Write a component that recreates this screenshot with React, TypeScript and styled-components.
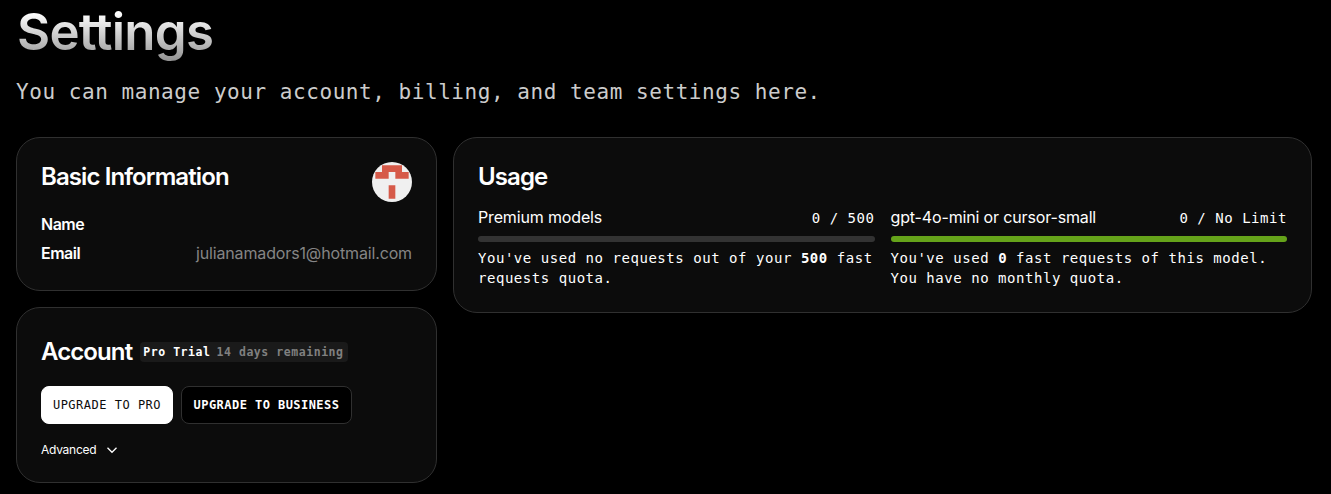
import React from "react";
import styled, { createGlobalStyle } from "styled-components";

const SANS = `Inter, "Liberation Sans", sans-serif`;
const MONO = `"DejaVu Sans Mono", "Liberation Mono", monospace`;

const GlobalStyle = createGlobalStyle`
  *, *::before, *::after { box-sizing: border-box; }
  html { background: #000; }
  body { margin: 0; background: #000; color: #fff; font-family: ${SANS}; overflow: hidden; }
`;

const Page = styled.main`
  height: 494px;
  padding: 0 19px 0 16px;
`;

const PageTitle = styled.h1`
  margin: 0;
  width: max-content;
  padding: 0 3px 0 1px;
  font-size: 51px;
  line-height: 64px;
  font-weight: 600;
  letter-spacing: -0.75px;
  color: transparent;
  background: linear-gradient(to bottom, #fff 20%, #8c8c8c 100%);
  background-clip: text;
  -webkit-background-clip: text;
`;

const Subtitle = styled.p`
  margin: 12px 0 0;
  font-family: ${MONO};
  font-size: 21px;
  line-height: 32px;
  letter-spacing: 0.55px;
  color: #ccc;
  white-space: nowrap;
`;

const Columns = styled.div`
  display: grid;
  grid-template-columns: 421px 859px;
  gap: 16px;
  align-items: start;
  margin-top: 29px;
`;

const Stack = styled.div`
  display: flex;
  flex-direction: column;
  gap: 16px;
`;

const Card = styled.section<{ $height: number }>`
  height: ${(p) => p.$height}px;
  padding: 24px;
  border: 1px solid #303030;
  border-radius: 24px;
  background: #0c0c0c;
`;

const AccountCard = styled(Card)`
  padding-top: 29px;
`;

const CardHeader = styled.header<{ $center?: boolean }>`
  display: flex;
  justify-content: ${(p) => (p.$center ? "flex-start" : "space-between")};
  align-items: ${(p) => (p.$center ? "center" : "flex-start")};
  gap: 8px;
`;

const CardTitle = styled.h2`
  margin: 0;
  font-size: 24px;
  line-height: 30px;
  font-weight: 600;
  letter-spacing: -0.9px;
  white-space: nowrap;
`;

const Avatar = styled.svg`
  width: 40px;
  height: 40px;
  border-radius: 50%;
  flex: none;
`;

const Details = styled.dl`
  margin: 10px 0 0;
  display: grid;
  row-gap: 5px;
`;

const DetailRow = styled.div`
  display: flex;
  justify-content: space-between;
  font-size: 16px;
  line-height: 24px;
`;

const Term = styled.dt`
  font-weight: 600;
  letter-spacing: -0.5px;
`;

const Value = styled.dd`
  margin: 0;
  color: #858585;
  letter-spacing: -0.14px;
`;

const Badge = styled.span`
  display: inline-flex;
  align-items: center;
  gap: 6px;
  height: 20px;
  padding: 0 4px 0 3px;
  border-radius: 4px;
  background: #1a1a1a;
  font-family: ${MONO};
  font-size: 11.5px;
  font-weight: 700;
  letter-spacing: 0.55px;
  color: #808080;
  white-space: nowrap;
`;

const BadgePlan = styled.span`
  color: #fff;
`;

const Actions = styled.div`
  display: flex;
  gap: 8px;
  margin-top: 19px;
`;

const Button = styled.button<{ $primary?: boolean }>`
  width: ${(p) => (p.$primary ? 132 : 171)}px;
  height: 38px;
  padding: 0;
  border: 1px solid ${(p) => (p.$primary ? "#fff" : "#303030")};
  border-radius: 8px;
  background: ${(p) => (p.$primary ? "#fff" : "#000")};
  color: ${(p) => (p.$primary ? "#0c0c0c" : "#fff")};
  font-family: ${MONO};
  font-size: 12px;
  font-weight: ${(p) => (p.$primary ? 400 : 700)};
  letter-spacing: ${(p) => (p.$primary ? 0.5 : 0.45)}px;
  white-space: nowrap;
`;

const Advanced = styled.button`
  display: flex;
  align-items: center;
  gap: 10px;
  margin-top: 18px;
  padding: 0;
  border: 0;
  background: none;
  color: #fff;
  font-family: ${SANS};
  font-size: 12px;
  line-height: 16px;
  letter-spacing: -0.25px;
`;

const Chevron = styled.svg`
  width: 12px;
  height: 12px;
`;

const UsageGrid = styled.div`
  display: grid;
  grid-template-columns: 1fr 1fr;
  gap: 16px;
  margin-top: 13px;
`;

const MeterHead = styled.div`
  display: flex;
  justify-content: space-between;
  align-items: baseline;
  line-height: 24px;
`;

const MeterName = styled.span`
  font-size: 16px;
  letter-spacing: -0.15px;
`;

const MeterCount = styled.span`
  font-family: ${MONO};
  font-size: 14px;
  letter-spacing: 0.54px;
`;

const Track = styled.div`
  height: 6px;
  margin-top: 6px;
  border-radius: 3px;
  background: #333;
  overflow: hidden;
`;

const Fill = styled.div`
  height: 100%;
  background: #65a31a;
`;

const MeterNote = styled.p`
  margin: 6px 0 0;
  font-family: ${MONO};
  font-size: 14px;
  line-height: 20px;
  letter-spacing: 0.54px;
  white-space: nowrap;
`;

interface MeterProps {
  name: string;
  count: string;
  percent: number;
  children: React.ReactNode;
}

function Meter({ name, count, percent, children }: MeterProps) {
  return (
    <div>
      <MeterHead>
        <MeterName>{name}</MeterName>
        <MeterCount>{count}</MeterCount>
      </MeterHead>
      <Track>
        <Fill style={{ width: `${percent}%` }} />
      </Track>
      <MeterNote>{children}</MeterNote>
    </div>
  );
}

export default function App() {
  return (
    <>
      <GlobalStyle />
      <Page>
        <PageTitle>Settings</PageTitle>
        <Subtitle>You can manage your account, billing, and team settings here.</Subtitle>
        <Columns>
          <Stack>
            <Card $height={154}>
              <CardHeader>
                <CardTitle>Basic Information</CardTitle>
                <Avatar viewBox="0 0 420 420" aria-hidden="true">
                  <rect width="420" height="420" fill="#f0f0f0" />
                  <path
                    fill="#d65a49"
                    d="M105 35H315V105H385V175H245V105H175V175H35V105H105ZM175 245H245V385H175Z"
                  />
                </Avatar>
              </CardHeader>
              <Details>
                <DetailRow>
                  <Term>Name</Term>
                </DetailRow>
                <DetailRow>
                  <Term>Email</Term>
                  <Value>julianamadors1@hotmail.com</Value>
                </DetailRow>
              </Details>
            </Card>
            <AccountCard $height={176}>
              <CardHeader $center>
                <CardTitle>Account</CardTitle>
                <Badge>
                  <BadgePlan>Pro Trial</BadgePlan>
                  <span>14 days remaining</span>
                </Badge>
              </CardHeader>
              <Actions>
                <Button $primary>UPGRADE TO PRO</Button>
                <Button>UPGRADE TO BUSINESS</Button>
              </Actions>
              <Advanced>
                Advanced
                <Chevron viewBox="0 0 12 12" fill="none" aria-hidden="true">
                  <path d="M1.5 3.8L6 8.3L10.5 3.8" stroke="#fff" strokeWidth="1.3" />
                </Chevron>
              </Advanced>
            </AccountCard>
          </Stack>
          <Card $height={176}>
            <CardTitle>Usage</CardTitle>
            <UsageGrid>
              <Meter name="Premium models" count="0 / 500" percent={0}>
                You've used no requests out of your <b>500</b> fast
                <br />
                requests quota.
              </Meter>
              <Meter name="gpt-4o-mini or cursor-small" count="0 / No Limit" percent={100}>
                You've used <b>0</b> fast requests of this model.
                <br />
                You have no monthly quota.
              </Meter>
            </UsageGrid>
          </Card>
        </Columns>
      </Page>
    </>
  );
}
